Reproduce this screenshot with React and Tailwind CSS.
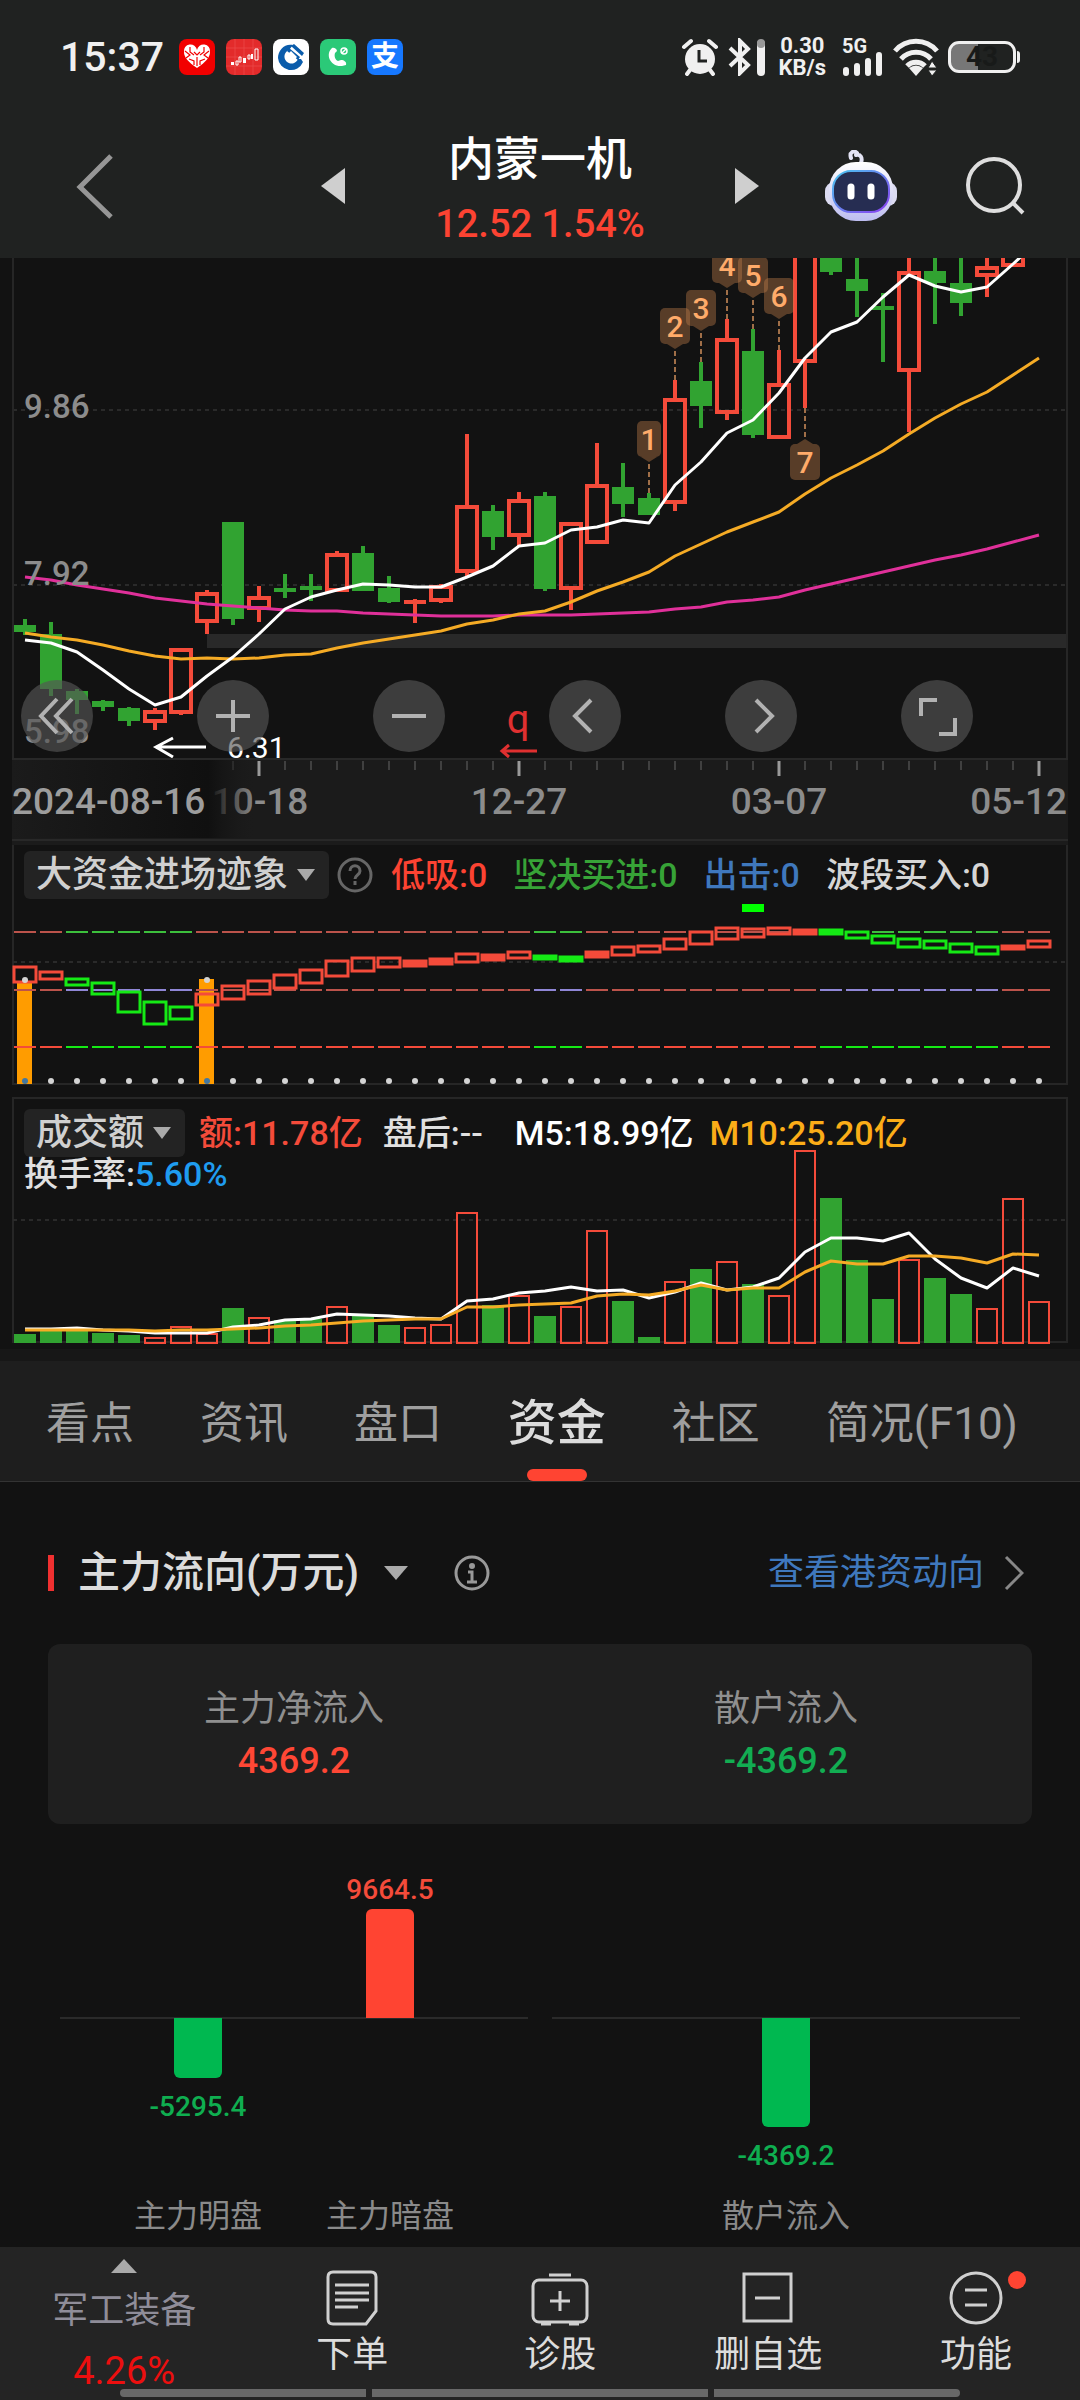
import React from "react";

const RED = "#f44b3a";
const GREEN = "#31a331";
const LIME = "#15ea15";

// x centre of the n-th week
const cx = (i) => 25 + i * 26;

// [color, high, low, top, bottom]
const candles = [
  ["g", 619, 635, 625, 632], ["g", 622, 696, 634, 689], ["g", 689, 714, 691, 700],
  ["g", 700, 711, 701, 707], ["g", 707, 726, 708, 721], ["r", 708, 730, 710, 723],
  ["r", 648, 715, 648, 714], ["r", 590, 634, 592, 623], ["g", 522, 625, 522, 619],
  ["r", 586, 622, 596, 610], ["g", 574, 598, 588, 592], ["g", 574, 601, 586, 590],
  ["r", 551, 592, 553, 592], ["g", 546, 591, 553, 591], ["g", 576, 603, 588, 602],
  ["r", 599, 623, 600, 604], ["r", 584, 603, 585, 602], ["r", 434, 576, 505, 573],
  ["g", 505, 550, 511, 537], ["r", 492, 546, 499, 537], ["g", 492, 591, 496, 589],
  ["r", 522, 610, 522, 590], ["r", 443, 544, 484, 544], ["g", 463, 517, 487, 504],
  ["g", 493, 515, 498, 515], ["r", 380, 511, 398, 504], ["g", 362, 428, 381, 406],
  ["r", 319, 420, 338, 414], ["g", 329, 438, 351, 435], ["r", 350, 439, 383, 439],
  ["r", 200, 408, 210, 363], ["g", 230, 275, 240, 272], ["g", 240, 317, 279, 291],
  ["g", 293, 362, 306, 310], ["r", 240, 432, 271, 372], ["g", 240, 324, 271, 283],
  ["g", 240, 316, 283, 303], ["r", 240, 297, 266, 277], ["r", 230, 267, 240, 267],
];

const ma5 = [640, 643, 652, 670, 689, 705, 697, 676, 657, 634, 609, 597, 590, 584, 585, 587, 587, 577, 566, 546, 543, 530, 527, 520, 523, 485, 462, 433, 420, 393, 358, 332, 322, 297, 275, 286, 292, 287, 264, 240];
const ma10 = [633, 637, 640, 645, 651, 656, 659, 658, 659, 658, 655, 654, 648, 643, 639, 635, 631, 624, 620, 614, 611, 602, 591, 582, 572, 556, 544, 532, 522, 512, 494, 478, 465, 451, 434, 418, 404, 392, 375, 358];
const ma30 = [577, 580, 585, 589, 593, 598, 601, 604, 606, 608, 610, 611, 611, 613, 614, 615, 616, 616, 616, 615, 615, 615, 614, 613, 612, 609, 607, 602, 600, 597, 590, 584, 578, 572, 566, 560, 555, 549, 542, 535];

// numbered tags: week index, tip y, label
const tags = [
  [24, 493, "1"], [25, 380, "2"], [26, 362, "3"], [27, 319, "4"], [28, 329, "5"], [29, 350, "6"],
];

// [color, top, bottom]
const signals = [
  ["r", 966, 983], ["r", 971, 980], ["g", 978, 986], ["g", 982, 995], ["g", 991, 1013],
  ["g", 1001, 1025], ["g", 1006, 1020], ["r", 993, 1006], ["r", 985, 1000], ["r", 980, 995],
  ["r", 974, 989], ["r", 969, 984], ["r", 960, 977], ["r", 957, 972], ["r", 957, 968],
  ["r", 960, 967], ["r", 958, 965], ["r", 953, 963], ["r", 954, 961], ["r", 951, 959],
  ["g", 955, 960], ["g", 956, 962], ["r", 951, 958], ["r", 946, 956], ["r", 945, 953],
  ["r", 938, 950], ["r", 931, 945], ["r", 927, 940], ["r", 928, 938], ["r", 927, 935],
  ["r", 929, 935], ["g", 929, 935], ["g", 931, 939], ["g", 935, 944], ["g", 938, 948],
  ["g", 940, 949], ["g", 943, 953], ["g", 946, 955], ["r", 945, 950], ["r", 940, 948],
];

const isDown = (i) => (i >= 2 && i <= 6) || i === 20 || i === 21 || (i >= 31 && i <= 37);

// [color, top]
const volumes = [
  ["g", 1334], ["g", 1331], ["g", 1331], ["g", 1333], ["g", 1335], ["r", 1337], ["r", 1326], ["r", 1333],
  ["g", 1308], ["r", 1317], ["g", 1320], ["g", 1319], ["r", 1306], ["g", 1315], ["g", 1325], ["r", 1327],
  ["r", 1324], ["r", 1212], ["g", 1305], ["r", 1295], ["g", 1316], ["r", 1306], ["r", 1230], ["g", 1301],
  ["g", 1337], ["r", 1281], ["g", 1269], ["r", 1261], ["g", 1284], ["r", 1295], ["r", 1150], ["g", 1198],
  ["g", 1260], ["g", 1299], ["r", 1259], ["g", 1278], ["g", 1294], ["r", 1308], ["r", 1198], ["r", 1301],
];
const vol5 = [1329, 1329, 1328, 1330, 1331, 1333, 1333, 1333, 1327, 1325, 1320, 1319, 1314, 1315, 1316, 1318, 1319, 1301, 1299, 1293, 1291, 1287, 1291, 1290, 1298, 1292, 1283, 1290, 1287, 1278, 1252, 1238, 1238, 1241, 1233, 1259, 1278, 1288, 1268, 1276];
const vol10 = [1330, 1330, 1330, 1330, 1330, 1331, 1330, 1330, 1329, 1328, 1326, 1325, 1323, 1321, 1320, 1319, 1319, 1307, 1307, 1305, 1304, 1303, 1296, 1294, 1295, 1291, 1285, 1290, 1288, 1288, 1272, 1261, 1264, 1264, 1256, 1256, 1258, 1263, 1254, 1255];

function Line({ data, color }) {
  const points = data.map((y, i) => `${cx(i)},${y}`).join(" ");
  return <polyline points={points} fill="none" stroke={color} strokeWidth="3" strokeLinejoin="round" />;
}

function GridLine({ y }) {
  return <path d={`M13 ${y}H1067`} stroke="#2a2a2a" strokeWidth="2" strokeDasharray="4 4" />;
}

function StatusBar() {
  return (
    <div className="flex h-[114px] items-center justify-between px-[60px]">
      <div className="flex items-center gap-[11px]">
        <span className="text-[41px] leading-none font-medium text-[#f0f0f0]">15:37</span>
        <svg className="ml-1 h-9 w-9" viewBox="0 0 36 36">
          <rect width="36" height="36" rx="8" fill="#f20000" />
          <path d="M18 29C9 23 5 18 5 13a6 6 0 0 1 13-2 6 6 0 0 1 13 2c0 5-4 10-13 16z" fill="#fff" />
          <path d="M6 12l5 4-4 3M30 12l-5 4 4 3M11 8v5l4 3M25 8v5l-4 3M15 13l3 3 3-3M18 18v9M10 20l5 2v4M26 20l-5 2v4" fill="none" stroke="#f20000" strokeWidth="1.2" />
        </svg>
        <svg className="h-9 w-9" viewBox="0 0 36 36">
          <rect width="36" height="36" rx="8" fill="#e32b2b" />
          <path d="M9 0v36M18 0v36M27 0v36M0 9h36M0 18h36M0 27h36" stroke="#ef5252" strokeWidth="0.6" />
          <path d="M5 23h3v3H5zM17 19h3v5h-3zM25 15h2v5h-2z" fill="#fff" />
          <path d="M10 22h2v4h-2zM13 18h2v5h-2zM22 16h2v4h-2zM29 10h3v11h-3z" fill="none" stroke="#fff" strokeWidth="1" />
        </svg>
        <svg className="h-9 w-9" viewBox="0 0 36 36">
          <rect width="36" height="36" rx="8" fill="#fff" />
          <path d="M20 6C12 4 5 11 5 19a13 13 0 0 0 25 4l-2-3h-3a7 7 0 1 1-9-9z" fill="#0a5cab" />
          <path d="M21 5l10 9-2 3-11-10zM16 9l11 9-2 3-11-9z" fill="#0a5cab" />
          <path d="M18 12l6 6-6 6-6-6z" fill="#fff" />
        </svg>
        <svg className="h-9 w-9" viewBox="0 0 36 36">
          <rect width="36" height="36" rx="8" fill="#2bc978" />
          <path d="M12 9c-7 6-2 19 10 18l4-1c1-3-2-5-5-5l-3 1c-3-1-4-5-3-8l2-2c0-2-3-4-5-3z" fill="#fff" />
          <circle cx="24" cy="12" r="3" fill="none" stroke="#fff" strokeWidth="1.5" />
          <path d="M22 14l4-4" stroke="#fff" strokeWidth="1.5" />
        </svg>
        <span className="flex h-9 w-9 items-center justify-center rounded-lg bg-[#1678ff] text-[28px] leading-none font-bold text-white">支</span>
      </div>

      <div className="flex items-center gap-2 text-[#f0f0f0]">
        <svg className="h-[38px] w-[38px]" viewBox="0 0 38 38" fill="none">
          <circle cx="19" cy="21" r="15" fill="#f0f0f0" />
          <path d="M3 9l7-6M35 9l-7-6M9 32l-3 4M29 32l3 4" stroke="#f0f0f0" strokeWidth="4" strokeLinecap="round" />
          <path d="M18 12v11h8" stroke="#202221" strokeWidth="3" />
        </svg>
        <svg className="h-[38px] w-[40px]" viewBox="0 0 40 38" fill="none" stroke="#f0f0f0" strokeWidth="4">
          <path d="M3 10l18 17-8 8V3l8 8L3 28" />
          <path d="M34 6v28" strokeWidth="8" strokeLinecap="round" />
          <path d="M34 5v1" stroke="#999" strokeWidth="8" strokeLinecap="round" />
        </svg>
        <div className="ml-1 text-center text-[22px] leading-[22px] font-bold">
          <p>0.30</p>
          <p>KB/s</p>
        </div>
        <div className="ml-2 flex flex-col">
          <span className="text-[20px] leading-[18px] font-bold">5G</span>
          <svg className="-mt-1 h-[26px] w-[42px]" viewBox="0 0 42 26" stroke="#f0f0f0" strokeWidth="6" strokeLinecap="round">
            <path d="M4 19v3M15 15v7M26 10v12M37 4v18" />
          </svg>
        </div>
        <svg className="h-[40px] w-[48px]" viewBox="0 0 48 40" fill="none" stroke="#f0f0f0" strokeWidth="5">
          <path d="M3 14c11-13 31-13 42 0M9 22c8-9 22-9 30 0M15 29c5-5 13-5 18 0" />
          <path d="M17 31l7 8 7-8q-7-5-14 0z" fill="#f0f0f0" stroke="none" />
          <path d="M36 31l4-7 5 7zM36 33l4 6 5-6z" fill="#f0f0f0" stroke="#202221" strokeWidth="1" />
        </svg>
        <div className="flex items-center gap-px">
          <span className="flex h-[32px] w-[68px] items-center justify-center rounded-[11px] border-3 border-[#f0f0f0] bg-linear-to-r from-[#777] from-44% to-transparent to-44% text-[28px] leading-none font-bold text-[#181a19]">
            43
          </span>
          <span className="h-3 w-[3px] rounded-r bg-[#f0f0f0]" />
        </div>
      </div>
    </div>
  );
}

function Robot() {
  return (
    <svg className="h-[72px] w-[74px]" viewBox="0 0 74 72">
      <defs>
        <linearGradient id="shell" x1="0" y1="0" x2="0" y2="1">
          <stop offset="0" stopColor="#fff" />
          <stop offset="1" stopColor="#bdbdf0" />
        </linearGradient>
        <linearGradient id="rim" x1="0" y1="0" x2="1" y2="1">
          <stop offset="0" stopColor="#49c6f0" />
          <stop offset="1" stopColor="#8a3df0" />
        </linearGradient>
      </defs>
      <path d="M37 13c2-6-1-9-5-8M27 8c-2-6 3-8 6-5" fill="none" stroke="#e4e4f5" strokeWidth="4" strokeLinecap="round" />
      <rect x="1" y="32" width="72" height="24" rx="9" fill="#dcdcf2" />
      <rect x="5" y="12" width="64" height="59" rx="27" fill="url(#shell)" />
      <rect x="9" y="21" width="56" height="41" rx="18" fill="#262d52" stroke="url(#rim)" strokeWidth="2" />
      <path d="M27 37v9M47 37v9" stroke="#fff" strokeWidth="7" strokeLinecap="round" />
    </svg>
  );
}

function StockHeader() {
  return (
    <div className="flex h-36 items-center justify-between pr-[54px] pl-[76px]">
      <button aria-label="返回">
        <svg className="h-[66px] w-[38px]" viewBox="0 0 38 66" fill="none" stroke="#969696" strokeWidth="5">
          <path d="M35 3L4 34l31 30" />
        </svg>
      </button>
      <div className="ml-[142px] flex items-center">
        <button aria-label="上一只">
          <svg className="h-9 w-6" viewBox="0 0 24 36" fill="#cfcfcf"><path d="M24 0v36L0 18z" /></svg>
        </button>
        <div className="w-[390px] pt-3 text-center font-medium">
          <h1 className="text-[46px] leading-[64px] text-white">内蒙一机</h1>
          <p className="text-[38px] leading-[66px] text-[#fc4332]">12.52 1.54%</p>
        </div>
        <button aria-label="下一只">
          <svg className="h-9 w-6" viewBox="0 0 24 36" fill="#cfcfcf"><path d="M0 0v36l24-18z" /></svg>
        </button>
      </div>
      <div className="flex items-center gap-[66px]">
        <button aria-label="智能助手"><Robot /></button>
        <button aria-label="搜索">
          <svg className="h-[62px] w-[62px]" viewBox="0 0 62 62" fill="none" stroke="#dedede" strokeWidth="4">
            <circle cx="30" cy="30" r="26" />
            <path d="M49 48l10 10" />
          </svg>
        </button>
      </div>
    </div>
  );
}

function Tag({ x, y, w, label, below }) {
  const top = below ? y + 36 : y - 72;
  const tip = below ? `M${x - 8} ${top}l8-5 8 5z` : `M${x - 8} ${top + 36}l8 5 8-5z`;
  return (
    <g>
      <path d={below ? `M${x} ${y}v31` : `M${x} ${y}v-31`} stroke="#a06f48" strokeWidth="2" strokeDasharray="5 3" />
      <g fill="#c3804b" fillOpacity="0.4">
        <rect x={x - w / 2} y={top} width={w} height="36" rx="5" />
        <path d={tip} />
      </g>
      <text x={x} y={top + 29} textAnchor="middle" fill="#ffab6a" className="text-[30px] font-medium">{label}</text>
    </g>
  );
}

const tools = [
  ["快退", "M15 -17L-1 0l16 17M0 -17L-16 0 0 17"],
  ["放大", "M-17 0h34M0 -16v32"],
  ["缩小", "M-17 0h34"],
  ["左移", "M6 -16L-10 0 6 16"],
  ["右移", "M-5 -16L11 0l-16 16"],
  ["全屏", "M-16 0v-16h16M18 2v16h-16"],
];

function KLineChart() {
  return (
    <section className="relative">
      <svg className="block w-full font-medium" viewBox="0 258 1080 587">
        <defs>
          <linearGradient id="fade" x1="0" x2="1">
            <stop offset="0" stopColor="#1b1b1b" />
            <stop offset="0.5" stopColor="#141414" />
            <stop offset="0.8" stopColor="#101010" />
            <stop offset="1" stopColor="#1b1b1b" stopOpacity="0" />
          </linearGradient>
        </defs>
        <rect x="207" y="634" width="861" height="14" fill="#292929" />
        <GridLine y={410} />
        <GridLine y={585} />
        <path d="M13 258v582M1067 258v501" stroke="#262626" strokeWidth="2" />

        {candles.map(([c, high, low, top, bottom], i) => {
          const color = c === "r" ? RED : GREEN;
          const open = c === "r" && bottom - top > 5;
          return (
            <g key={i} stroke={color} strokeWidth="4">
              <path d={open ? `M${cx(i)} ${high}V${top}M${cx(i)} ${bottom}V${low}` : `M${cx(i)} ${high}V${low}`} />
              {open ? (
                <rect x={cx(i) - 10} y={top + 2} width="20" height={bottom - top - 4} fill="none" />
              ) : (
                <rect x={cx(i) - 11} y={top} width="22" height={bottom - top} fill={color} stroke="none" />
              )}
            </g>
          );
        })}
        <Line data={ma30} color="#e0309a" />
        <Line data={ma10} color="#f5ab25" />
        <Line data={ma5} color="#fff" />

        <g fill="#8c8c8c" className="text-[33px]">
          <text x="24" y="418">9.86</text>
          <text x="24" y="585">7.92</text>
          <text x="24" y="743">5.98</text>
        </g>

        {tags.map(([i, y, label]) => (
          <Tag key={label} x={cx(i)} y={y} w={label === "1" ? 24 : 30} label={label} />
        ))}
        <Tag x={cx(30)} y={408} w={30} label="7" below />

        <path d="M206 747h-50M173 738l-17 9 17 10" fill="none" stroke="#fff" strokeWidth="3" />
        <text x="227" y="758" fill="#fff" className="text-[30px] font-normal">6.31</text>
        <text x="518" y="733" textAnchor="middle" fill="#e03030" className="text-[40px] font-normal">q</text>
        <path d="M537 751h-35M509 745l-7 6 7 6" fill="none" stroke="#e03030" strokeWidth="3" />

        {/* date axis */}
        <rect x="12" y="760" width="1056" height="85" fill="#1b1b1b" />
        <path d="M12 759h1056M12 840h1056" stroke="#282828" strokeWidth="2" />
        {Array.from({ length: 33 }, (_, n) => n + 7).map((i) => (
          <path
            key={i}
            d={`M${cx(i)} 761v${i % 10 === 9 ? 15 : 9}`}
            stroke={i % 10 === 9 ? "#999" : "#666"}
            strokeWidth={i % 10 === 9 ? 3 : 1}
          />
        ))}
        <g fill="#8c8c8c" textAnchor="middle" className="text-[37px]">
          <text x="260" y="814">10-18</text>
          <text x="519" y="814">12-27</text>
          <text x="779" y="814">03-07</text>
          <text x="1067" y="814" textAnchor="end">05-12</text>
        </g>
        <rect x="12" y="760" width="245" height="78" fill="url(#fade)" />
        <text x="12" y="814" fill="#9d9d9d" className="text-[37px]">2024-08-16</text>
      </svg>

      <div className="absolute top-[422px] right-[107px] left-[21px] flex justify-between">
        {tools.map(([name, d]) => (
          <button key={name} aria-label={name} className="h-[72px] w-[72px] rounded-full bg-[#555]/65">
            <svg viewBox="-36 -36 72 72" fill="none" stroke="#b2b2b2" strokeWidth="4">
              <path d={d} />
            </svg>
          </button>
        ))}
      </div>
    </section>
  );
}

function IndicatorSelect({ label, value }) {
  return (
    <label className="flex h-12 items-center gap-2 rounded-md bg-[#232323] pr-[14px] pl-3">
      <select aria-label={label} className="appearance-none bg-transparent text-[36px] leading-[48px] font-medium text-[#d0d0d0]">
        <option>{value}</option>
      </select>
      <svg className="h-3 w-[18px]" viewBox="0 0 18 12" fill="#aaa"><path d="M0 0h18l-9 12z" /></svg>
    </label>
  );
}

function SignalChart() {
  return (
    <section className="grid">
      <svg className="col-start-1 row-start-1 block w-full" viewBox="0 845 1080 246">
        <path d="M13 845v239h1054V845" fill="none" stroke="#262626" strokeWidth="2" />
        <GridLine y={962} />
        <rect x="17" y="982" width="15" height="102" fill="#ff9c00" />
        <rect x="199" y="979" width="15" height="105" fill="#ff9c00" />
        <rect x="742" y="904" width="22" height="8" fill="#00ff00" />
        {signals.map(([c, top, bottom], i) => {
          const down = isDown(i);
          const x = cx(i);
          return (
            <g key={i} fill="none" strokeWidth="2">
              <path d={`M${x - 11} 932h22`} stroke={down ? "#3cc03c" : "#bc534b"} />
              <path d={`M${x - 11} 990h22`} stroke={down ? "#8f86d6" : "#bc534b"} />
              <path d={`M${x - 11} 1047h22`} stroke={down ? LIME : RED} />
              <rect
                x={x - 11}
                y={top + 1}
                width="22"
                height={bottom - top - 2}
                stroke={c === "r" ? RED : LIME}
                strokeWidth="3"
                fill={bottom - top < 8 ? (c === "r" ? RED : LIME) : "none"}
              />
              <circle cx={x} cy="1081" r="3" fill={i === 0 || i === 7 ? "#4477a0" : "#d4d4d4"} />
            </g>
          );
        })}
        <circle cx={cx(0)} cy="980" r="3" fill="#d4d4d4" />
        <circle cx={cx(7)} cy="980" r="3" fill="#d4d4d4" />
      </svg>
      <div className="col-start-1 row-start-1 flex items-center self-start pt-[6px] pl-6 text-[34px] leading-[48px] font-medium">
        <IndicatorSelect label="指标" value="大资金进场迹象" />
        <button aria-label="指标说明" className="ml-2">
          <svg className="h-9 w-9" viewBox="0 0 36 36" fill="none" stroke="#666" strokeWidth="3">
            <circle cx="18" cy="18" r="16" />
            <path d="M13 14c0-7 10-7 10 0 0 4-5 4-5 8M18 24v4" />
          </svg>
        </button>
        <div className="ml-[18px] flex gap-[26px]">
          <span className="text-[#fc4332]">低吸:0</span>
          <span className="text-[#37a337]">坚决买进:0</span>
          <span className="text-[#3f78bd]">出击:0</span>
          <span className="text-[#d6d6d6]">波段买入:0</span>
        </div>
      </div>
    </section>
  );
}

function VolumeChart() {
  return (
    <section className="grid">
      <svg className="col-start-1 row-start-1 block w-full" viewBox="0 1091 1080 258">
        <path d="M13 1098h1054v244H13z" fill="none" stroke="#262626" strokeWidth="2" />
        <GridLine y={1220} />
        {volumes.map(([c, top], i) =>
          c === "r" ? (
            <rect key={i} x={cx(i) - 10} y={top + 1} width="20" height={1342 - top} fill="none" stroke={RED} strokeWidth="2" />
          ) : (
            <rect key={i} x={cx(i) - 11} y={top} width="22" height={1343 - top} fill={GREEN} />
          )
        )}
        <Line data={vol5} color="#fff" />
        <Line data={vol10} color="#f5ab25" />
      </svg>
      <div className="col-start-1 row-start-1 self-start pt-[18px] pl-6 text-[34px] font-medium text-[#e0e0e0]">
        <div className="flex items-center leading-[48px]">
          <IndicatorSelect label="成交指标" value="成交额" />
          <span className="ml-[14px] text-[#f44b3a]">额:11.78亿</span>
          <span className="ml-5">盘后:--</span>
          <span className="ml-8 text-white">M5:18.99亿</span>
          <span className="ml-4 text-[#fbad18]">M10:25.20亿</span>
        </div>
        <p className="leading-[34px]">
          换手率:<span className="text-[#1f9cf0]">5.60%</span>
        </p>
      </div>
    </section>
  );
}

const tabs = ["看点", "资讯", "盘口", "资金", "社区", "简况(F10)"];

function Tabs() {
  return (
    <nav className="border-t-12 border-b border-t-[#171717] border-b-[#333] bg-[#1e1e1e]">
      <div className="flex justify-between pr-[62px] pl-[46px]">
        {tabs.map((tab) =>
          tab === "资金" ? (
            <button key={tab} aria-current="page" className="flex h-[120px] flex-col items-center text-[49px] font-medium text-[#dcdcdc]">
              <span className="h-[108px] leading-[126px]">{tab}</span>
              <span className="h-3 w-[60px] rounded-md bg-[#ff4432]" />
            </button>
          ) : (
            <button key={tab} className="h-[120px] pt-[6px] text-[44px] leading-[60px] text-[#9f9f9f]">{tab}</button>
          )
        )}
      </div>
    </nav>
  );
}

function FlowColumn({ value, size, name }) {
  const up = value > 0;
  return (
    <div className="flex w-48 flex-col items-center text-[28px] leading-[38px] font-medium">
      <div className="flex h-[194px] flex-col items-center justify-end">
        {up && <p className="text-[#f44b3a]">{value}</p>}
        {up && <div className="w-12 rounded-t-md bg-[#ff4432]" style={{ height: size }} />}
      </div>
      <div className="flex h-[174px] w-full flex-col items-center">
        {!up && <div className="w-12 rounded-b-md bg-[#00b850]" style={{ height: size }} />}
        {!up && <p className="mt-[10px] text-[#0fae50]">{value}</p>}
      </div>
      <p className="text-[32px] leading-[48px] font-normal text-[#8a8a8a]">{name}</p>
    </div>
  );
}

function FlowGroup({ children }) {
  return (
    <div className="grid flex-1">
      <div className="col-start-1 row-start-1 mt-[193px] h-[2px] bg-[#2a2a2a]" />
      <div className="col-start-1 row-start-1 flex justify-center">{children}</div>
    </div>
  );
}

function MainFlow() {
  return (
    <section className="flex-1 px-12">
      <div className="flex h-[162px] items-center pt-5">
        <span className="h-9 w-[6px] bg-[#f03030]" />
        <label className="ml-6 flex items-center gap-6">
          <select aria-label="资金流向" className="appearance-none bg-transparent text-[42px] leading-[56px] font-medium text-[#dcdcdc]">
            <option>主力流向(万元)</option>
          </select>
          <svg className="h-[14px] w-6" viewBox="0 0 24 14" fill="#aaa"><path d="M0 0h24L12 14z" /></svg>
        </label>
        <button aria-label="说明" className="ml-[46px]">
          <svg className="h-9 w-9" viewBox="0 0 36 36" fill="none" stroke="#999" strokeWidth="3">
            <circle cx="18" cy="18" r="16" />
            <path d="M14 17h4v9M13 27h10" />
            <circle cx="18" cy="11" r="1.5" fill="#999" />
          </svg>
        </button>
        <a href="#hk" className="ml-auto flex items-center gap-5 pr-2 text-[36px] leading-[48px] text-[#3f78bd]">
          查看港资动向
          <svg className="h-9 w-5" viewBox="0 0 20 36" fill="none" stroke="#888" strokeWidth="3"><path d="M2 2l16 16L2 34" /></svg>
        </a>
      </div>

      <div className="grid h-[180px] grid-cols-2 rounded-xl bg-[#1f1f1f] pt-[39px] text-center text-[36px] leading-[52px]">
        <div>
          <p className="text-[#8f8f8f]">主力净流入</p>
          <p className="font-medium text-[#ff4735]">4369.2</p>
        </div>
        <div>
          <p className="text-[#8f8f8f]">散户流入</p>
          <p className="font-medium text-[#12ad52]">-4369.2</p>
        </div>
      </div>

      <div className="flex gap-6 px-3">
        <FlowGroup>
          <FlowColumn value={-5295.4} size={60} name="主力明盘" />
          <FlowColumn value={9664.5} size={109} name="主力暗盘" />
        </FlowGroup>
        <FlowGroup>
          <FlowColumn value={-4369.2} size={109} name="散户流入" />
        </FlowGroup>
      </div>
    </section>
  );
}

function NavButton({ label, dot, children }) {
  return (
    <button className="flex flex-1 flex-col items-center pt-5 text-[36px] leading-[56px] text-[#dcdcdc]">
      <span className="relative">
        <svg className="block h-[60px] w-[60px]" viewBox="0 0 60 60" fill="none" stroke="#d0d0d0" strokeWidth="3">
          {children}
        </svg>
        {dot && <span className="absolute top-1 -right-5 h-[18px] w-[18px] rounded-full bg-[#ff4432]" />}
      </span>
      {label}
    </button>
  );
}

function BottomNav() {
  return (
    <footer className="bg-[#242424]">
      <div className="flex h-[142px]">
        <button className="flex w-[23%] flex-col items-center pt-3 text-[36px] leading-[60px]">
          <svg className="h-[14px] w-[26px] shrink-0" viewBox="0 0 26 14" fill="#aaa"><path d="M13 0l13 14H0z" /></svg>
          <span className="mt-2 text-[#8f8d99]">军工装备</span>
          <span className="text-[38px] text-[#ec0f0f]">4.26%</span>
        </button>
        <NavButton label="下单">
          <path d="M11 5h38q5 0 5 5v34L44 57H11q-5 0-5-5V10q0-5 5-5M13 18h34M13 26h34M13 33h34M13 40h23" />
        </NavButton>
        <NavButton label="诊股">
          <rect x="3" y="13" width="54" height="42" rx="6" />
          <path d="M19 8h22M11 57h10M39 57h10M30 24v20M20 34h20" />
        </NavButton>
        <NavButton label="删自选">
          <path d="M6 7h47v47H6zM17 31h25" />
        </NavButton>
        <NavButton label="功能" dot>
          <circle cx="30" cy="31" r="25" />
          <path d="M19 23h22M19 38h22" />
        </NavButton>
      </div>
      <div className="flex gap-[6px] px-[120px] pb-[3px]">
        <span className="h-2 w-[246px] rounded-l-full bg-[#686868]" />
        <span className="h-2 flex-1 bg-[#686868]" />
        <span className="h-2 w-[246px] rounded-r-full bg-[#686868]" />
      </div>
    </footer>
  );
}

export default function App() {
  return (
    <div className="flex min-h-screen flex-col bg-[#121212] font-[Roboto,'Noto_Sans_CJK_SC',sans-serif]">
      <header className="bg-[#202221]">
        <StatusBar />
        <StockHeader />
      </header>
      <KLineChart />
      <SignalChart />
      <VolumeChart />
      <Tabs />
      <MainFlow />
      <BottomNav />
    </div>
  );
}
